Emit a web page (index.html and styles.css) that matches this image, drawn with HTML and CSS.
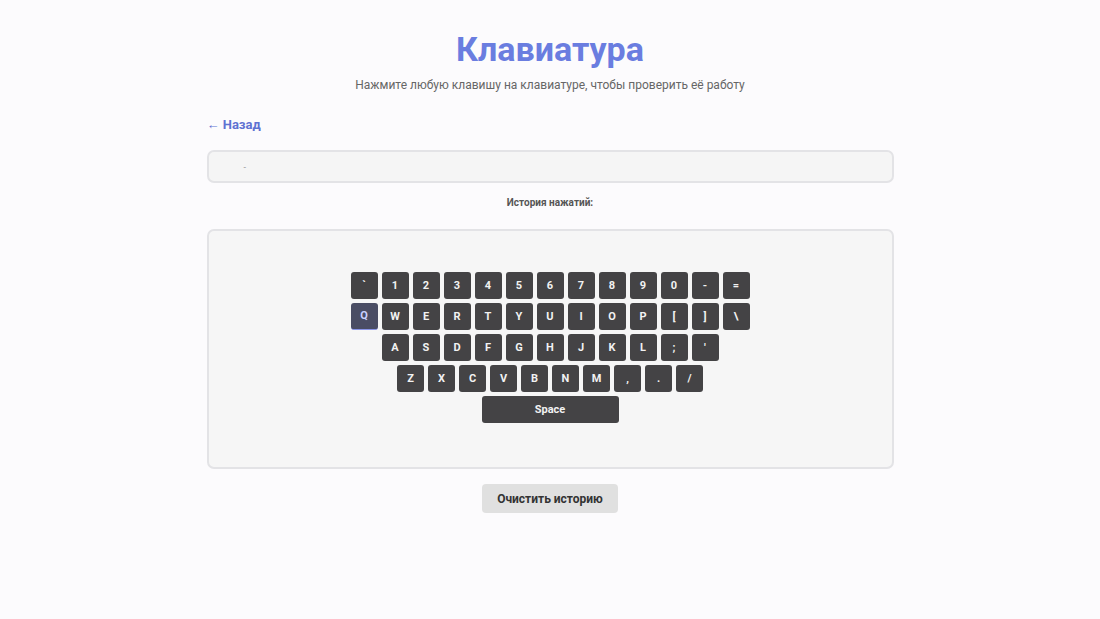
FILE: index.html
```html
<!DOCTYPE html>
<html lang="ru">
<head>
<meta charset="utf-8">
<title>Клавиатура</title>
<link rel="stylesheet" href="styles.css">
</head>
<body>
<div class="page">
  <h1 class="title">Клавиатура</h1>
  <p class="subtitle">Нажмите любую клавишу на клавиатуре, чтобы проверить её работу</p>
  <a class="back" href="#">← Назад</a>
  <div class="display"><span class="display-char">-</span></div>
  <div class="history-label">История нажатий:</div>
  <div class="history">
    <div class="keyboard">
      <div class="row">
        <span class="key">`</span><span class="key">1</span><span class="key">2</span><span class="key">3</span><span class="key">4</span><span class="key">5</span><span class="key">6</span><span class="key">7</span><span class="key">8</span><span class="key">9</span><span class="key">0</span><span class="key">-</span><span class="key">=</span>
      </div>
      <div class="row">
        <span class="key key-active">Q</span><span class="key">W</span><span class="key">E</span><span class="key">R</span><span class="key">T</span><span class="key">Y</span><span class="key">U</span><span class="key">I</span><span class="key">O</span><span class="key">P</span><span class="key">[</span><span class="key">]</span><span class="key">\</span>
      </div>
      <div class="row">
        <span class="key">A</span><span class="key">S</span><span class="key">D</span><span class="key">F</span><span class="key">G</span><span class="key">H</span><span class="key">J</span><span class="key">K</span><span class="key">L</span><span class="key">;</span><span class="key">'</span>
      </div>
      <div class="row">
        <span class="key">Z</span><span class="key">X</span><span class="key">C</span><span class="key">V</span><span class="key">B</span><span class="key">N</span><span class="key">M</span><span class="key">,</span><span class="key">.</span><span class="key">/</span>
      </div>
      <div class="row">
        <span class="key key-space">Space</span>
      </div>
    </div>
  </div>
  <div class="actions">
    <button class="clear-btn" type="button">Очистить историю</button>
  </div>
</div>
</body>
</html>
```

FILE: styles.css
```css
html, body {
  margin: 0;
  padding: 0;
}

body {
  background: #fcfbfd;
  font-family: Roboto, "Noto Sans", sans-serif;
  color: #333;
}

.page {
  width: 687px;
  margin: 0 auto;
  padding-top: 28px;
}

.title {
  margin: 0;
  text-align: center;
  font-size: 34px;
  line-height: 42px;
  font-weight: 700;
  color: #6a7de0;
}

.subtitle {
  margin: 6px 0 0;
  text-align: center;
  font-size: 12px;
  line-height: 18px;
  color: #666;
}

.back {
  display: inline-block;
  margin-top: 22px;
  font-size: 13px;
  line-height: 18px;
  font-weight: 700;
  color: #5f72d2;
  text-decoration: none;
}

.display {
  margin-top: 16px;
  height: 29px;
  border: 2px solid #e3e3e6;
  border-radius: 7px;
  background: #f5f5f5;
  display: flex;
  align-items: center;
  padding-left: 35px;
}

.display-char {
  font-size: 9px;
  color: #999;
}

.history-label {
  margin-top: 12px;
  text-align: center;
  font-size: 10px;
  line-height: 16px;
  font-weight: 700;
  color: #555;
}

.history {
  margin-top: 18px;
  height: 236px;
  border: 2px solid #e3e3e6;
  border-radius: 7px;
  background: #f6f6f6;
  display: flex;
  align-items: center;
  justify-content: center;
}

.keyboard {
  display: flex;
  flex-direction: column;
  align-items: center;
  gap: 4px;
  margin-top: -4px;
}

.row {
  display: flex;
  gap: 4px;
}

.key {
  width: 27px;
  height: 27px;
  border-radius: 3px;
  background: #444345;
  color: #f2f2f2;
  font-size: 11px;
  font-weight: 700;
  display: flex;
  align-items: center;
  justify-content: center;
  box-sizing: border-box;
}

.key-active {
  background: #4a4d64;
  color: #c9d0ff;
  border-bottom: 1px solid #8a95e8;
}

.key-space {
  width: 137px;
}

.actions {
  display: flex;
  justify-content: center;
  margin-top: 15px;
}

.clear-btn {
  width: 136px;
  height: 29px;
  border: none;
  border-radius: 4px;
  background: #e0e0e0;
  color: #333;
  font-family: Roboto, "Noto Sans", sans-serif;
  font-size: 12px;
  font-weight: 700;
  padding: 0;
}
```
